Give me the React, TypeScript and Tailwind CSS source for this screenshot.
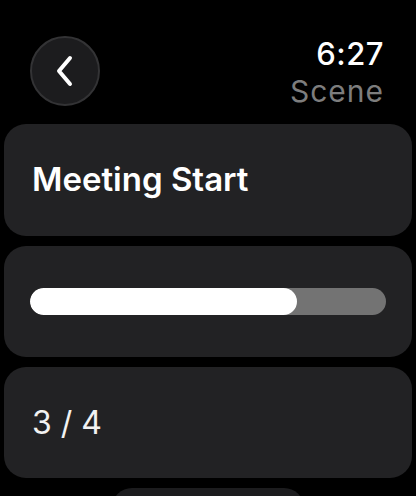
import React from 'react';

const progress = 0.75;

export default function App() {
  return (
    <div className="w-[416px] h-[496px] overflow-hidden bg-black text-white font-['Inter',sans-serif] flex flex-col">
      {/* Header */}
      <div className="h-[124px] shrink-0 flex items-start justify-between pl-[30px] pr-[32px] pt-[36px]">
        <button className="w-[70px] h-[70px] rounded-full bg-[#1c1c1e] border-2 border-[#333335] flex items-center justify-center">
          <svg width="22" height="32" viewBox="0 0 22 32" fill="none">
            <path d="M16 3 L5 16 L16 29" stroke="white" strokeWidth="4" strokeLinecap="round" strokeLinejoin="round" />
          </svg>
        </button>
        <div className="flex flex-col items-end">
          <span className="text-[31px] leading-[36px] font-medium tracking-[0.5px]">6:27</span>
          <span className="text-[30px] leading-[36px] tracking-[1px] text-[#7d7d7d] mt-[1px]">Scene</span>
        </div>
      </div>

      {/* Cards */}
      <div className="shrink-0 flex flex-col gap-[10px] px-[4px]">
        <div className="h-[112px] shrink-0 rounded-[22px] bg-[#222224] flex items-center px-[28px]">
          <span className="text-[33px] font-semibold">Meeting Start</span>
        </div>
        <div className="h-[111px] shrink-0 rounded-[22px] bg-[#222224] flex items-center px-[26px]">
          <div className="w-full h-[27px] rounded-full bg-[#737373] overflow-hidden">
            <div className="h-full rounded-full bg-white" style={{ width: `${progress * 100}%` }} />
          </div>
        </div>
        <div className="h-[111px] shrink-0 rounded-[22px] bg-[#222224] flex items-center px-[28px]">
          <span className="text-[32px] text-[#f2f2f2]">3 / 4</span>
        </div>
        <div className="shrink-0 flex justify-center">
          <div className="w-[192px] h-[40px] rounded-[20px] bg-[#1c1c1e]" />
        </div>
      </div>
    </div>
  );
}
